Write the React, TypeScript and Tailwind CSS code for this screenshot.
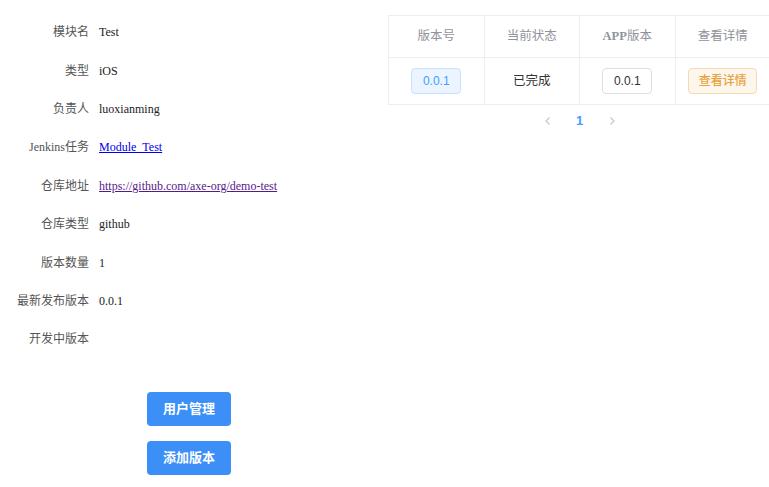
import React from 'react';

const serif = '"Liberation Serif", "Noto Sans CJK SC", serif';
const sans = '"Liberation Sans", "Noto Sans CJK SC", sans-serif';

const info: { label: string; value?: React.ReactNode }[] = [
  { label: '模块名', value: 'Test' },
  { label: '类型', value: 'iOS' },
  { label: '负责人', value: 'luoxianming' },
  {
    label: 'Jenkins任务',
    value: <a href="#" className="text-[#0000ee] underline">Module_Test</a>,
  },
  {
    label: '仓库地址',
    value: <a href="#" className="text-[#551a8b] underline">https://github.com/axe-org/demo-test</a>,
  },
  { label: '仓库类型', value: 'github' },
  { label: '版本数量', value: '1' },
  { label: '最新发布版本', value: '0.0.1' },
  { label: '开发中版本' },
];

export default function App() {
  return (
    <div className="flex h-[487px] w-[769px] overflow-hidden bg-white" style={{ fontFamily: serif }}>
      {/* module info */}
      <div className="w-[388px] shrink-0 pt-[13px]">
        {info.map((row) => (
          <div key={row.label} className="flex h-[38.4px] items-center text-[12px]">
            <span className="w-[89px] shrink-0 text-right text-[#555]">{row.label}</span>
            <span className="pl-[10px] text-[#222]">{row.value}</span>
          </div>
        ))}
        <div className="mt-[33px] flex flex-col gap-[15px] pl-[147px]" style={{ fontFamily: sans }}>
          <button className="h-[34px] w-[84px] rounded-[4px] bg-[#3b8ff6] text-[13px] font-bold text-white">用户管理</button>
          <button className="h-[34px] w-[84px] rounded-[4px] bg-[#3b8ff6] text-[13px] font-bold text-white">添加版本</button>
        </div>
      </div>

      {/* versions table */}
      <div className="w-[383px] shrink-0 pt-[15px]">
        <div className="border-l border-t border-[#ebeef5]">
          <div className="grid h-[42px] grid-cols-4 border-b border-[#ebeef5] text-[12.5px] text-[#909399]">
            <div className="flex items-center justify-center border-r border-[#ebeef5]">版本号</div>
            <div className="flex items-center justify-center border-r border-[#ebeef5]">当前状态</div>
            <div className="flex items-center justify-center border-r border-[#ebeef5]">
              <span className="font-bold">APP</span>版本
            </div>
            <div className="flex items-center justify-center border-r border-[#ebeef5]">查看详情</div>
          </div>
          <div className="grid h-[47px] grid-cols-4 border-b border-[#ebeef5] text-[12.5px]" style={{ fontFamily: sans }}>
            <div className="flex items-center justify-center border-r border-[#ebeef5]">
              <span className="flex h-[26px] w-[50px] items-center justify-center rounded-[4px] border border-[#c6e2ff] bg-[#ecf5ff] text-[12px] text-[#409eff]">0.0.1</span>
            </div>
            <div className="flex items-center justify-center border-r border-[#ebeef5] text-[#333]">已完成</div>
            <div className="flex items-center justify-center border-r border-[#ebeef5]">
              <span className="flex h-[26px] w-[50px] items-center justify-center rounded-[4px] border border-[#dcdfe6] bg-white text-[12px] text-[#333]">0.0.1</span>
            </div>
            <div className="flex items-center justify-center border-r border-[#ebeef5]">
              <span className="flex h-[26px] w-[69px] items-center justify-center rounded-[4px] border border-[#f5dab1] bg-[#fdf6ec] text-[12px] font-medium text-[#e6a23c]">查看详情</span>
            </div>
          </div>
        </div>
        <div className="mt-[2px] flex h-[28px] items-center justify-center gap-[2px] text-[13px]" style={{ fontFamily: sans }}>
          <span className="flex w-[30px] justify-center text-[#c0c4cc]">
            <svg width="10" height="10" viewBox="0 0 10 10" fill="none" stroke="currentColor" strokeWidth="1.1">
              <path d="M6.5 1.5 3 5l3.5 3.5" />
            </svg>
          </span>
          <span className="flex w-[30px] justify-center font-bold text-[#409eff]">1</span>
          <span className="flex w-[30px] justify-center text-[#c0c4cc]">
            <svg width="10" height="10" viewBox="0 0 10 10" fill="none" stroke="currentColor" strokeWidth="1.1">
              <path d="M3.5 1.5 7 5 3.5 8.5" />
            </svg>
          </span>
        </div>
      </div>
    </div>
  );
}
